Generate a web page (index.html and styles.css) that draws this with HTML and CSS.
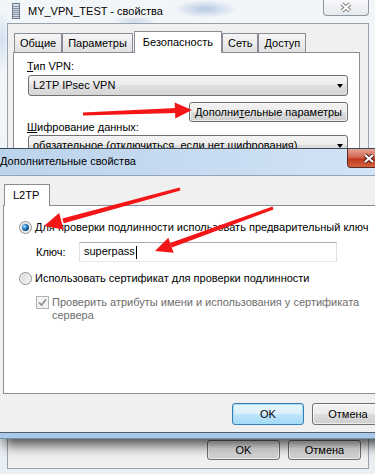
FILE: index.html
```html
<!DOCTYPE html>
<html lang="ru">
<head>
<meta charset="utf-8">
<title>Дополнительные свойства</title>
<link rel="stylesheet" href="styles.css">
</head>
<body>
<div class="screen">
  <div class="win-bg">
    <div class="bg-title">
      <svg class="app-icon" width="8" height="16" viewBox="0 0 8 16">
        <rect x="0.5" y="0.5" width="7" height="15" fill="#d3dbe4" stroke="#6f7d8c"/>
        <path d="M1 3.5h6M1 5.5h6M1 7.5h6M1 9.5h6M1 11.5h6M1 13.5h6" stroke="#8192a4" stroke-width="1"/>
      </svg>
      <span class="bg-title-text">MY_VPN_TEST - свойства</span>
      <div class="bg-close">
        <svg width="14" height="11" viewBox="0 0 14 11"><path d="M3 2l8 7M11 2l-8 7" stroke="#7d7d7d" stroke-width="4"/><path d="M3 2l8 7M11 2l-8 7" stroke="#fff" stroke-width="2"/></svg>
      </div>
    </div>
    <div class="bg-client">
      <div class="tabs">
        <div class="tab">Общие</div>
        <div class="tab">Параметры</div>
        <div class="tab active">Безопасность</div>
        <div class="tab">Сеть</div>
        <div class="tab">Доступ</div>
      </div>
      <div class="bg-panel">
        <div class="label"><u>Т</u>ип VPN:</div>
        <div class="combo"><span class="combo-text">L2TP IPsec VPN</span><span class="caret"></span></div>
        <div class="btn-row"><span class="btn btn-wide">Дополни<u>т</u>ельные параметры</span></div>
        <div class="label label-enc"><u>Ш</u>ифрование данных:</div>
        <div class="combo combo-enc"><span class="combo-text">обязательное (отключиться, если нет шифрования)</span><span class="caret"></span></div>
      </div>
      <div class="dlg-buttons bg-buttons">
        <span class="btn btn-dlg">OK</span>
        <span class="btn btn-dlg">Отмена</span>
      </div>
    </div>
  </div>

  <div class="win-fg">
    <div class="fg-title">
      <span class="fg-title-text">Дополнительные свойства</span>
      <div class="fg-close">
        <svg width="14" height="11" viewBox="0 0 14 11"><path d="M3 2l8 7M11 2l-8 7" stroke="#4a1a12" stroke-width="4"/><path d="M3 2l8 7M11 2l-8 7" stroke="#fff" stroke-width="2.2"/></svg>
      </div>
    </div>
    <div class="fg-client">
      <div class="tabs fg-tabs"><div class="tab active fg-tab">L2TP</div></div>
      <div class="fg-panel">
        <div class="opt"><span class="radio checked"></span><span>Для проверки подлинности использовать предварительный ключ</span></div>
        <div class="key-row"><span class="key-label">Ключ:</span><div class="input"><span class="typed">superpass</span></div></div>
        <div class="opt opt-cert"><span class="radio"></span><span>Использовать сертификат для проверки подлинности</span></div>
        <div class="opt opt-check">
          <svg class="checkbox" width="13" height="13" viewBox="0 0 13 13"><rect x="0.5" y="0.5" width="12" height="12" fill="#f4f4f4" stroke="#b1b1b1"/><path d="M3 6.5l2.5 2.5L10 3.5" fill="none" stroke="#8d8d8d" stroke-width="1.6"/></svg>
          <span class="disabled-text">Проверить атрибуты имени и использования у сертификата сервера</span>
        </div>
      </div>
      <div class="dlg-buttons fg-buttons">
        <span class="btn btn-dlg btn-default">OK</span>
        <span class="btn btn-dlg">Отмена</span>
      </div>
    </div>
  </div>

  <svg class="arrows" width="375" height="474" viewBox="0 0 375 474">
    <g fill="#f41616">
      <polygon points="82.9,112.5 175.9,108.1 176.1,113.1 83.1,115.5"/>
      <polygon points="192,110 175.3,118.6 174.7,102.6"/>
      <polygon points="179.6,187.6 180.4,190.4 63.7,223.2 62.3,218.4"/>
      <polygon points="44,226 63.6,229.5 59.2,213.1"/>
      <polygon points="272.5,206.6 273.5,209.4 171.9,247.5 170.1,242.9"/>
      <polygon points="155,251 173.7,252.7 168.3,237.7"/>
    </g>
  </svg>
</div>
</body>
</html>
```

FILE: styles.css
```css
* { box-sizing: border-box; }
html, body { margin: 0; padding: 0; }
body {
  width: 375px; height: 474px; overflow: hidden;
  font-family: "Liberation Sans", Arial, sans-serif;
  font-size: 11px; line-height: 13px; color: #000;
  background: #eef2f6;
}
.screen {
  position: relative; width: 375px; height: 474px; overflow: hidden;
  background:
    radial-gradient(ellipse 32px 9px at 205px 9px, rgba(110,145,200,.45), rgba(110,145,200,0)),
    radial-gradient(ellipse 22px 5px at 135px 21px, rgba(120,150,200,.3), rgba(120,150,200,0)),
    radial-gradient(ellipse 10px 30px at 2px 40px, rgba(150,185,225,.35), rgba(150,185,225,0)),
    linear-gradient(#f3f6f9, #eaeff4);
}

/* background window */
.win-bg { display: flex; flex-direction: column; height: 474px; padding: 0 6px 0 7px; }
.bg-title { height: 23px; flex: none; display: flex; align-items: center; padding-left: 5px; }
.app-icon { flex: none; align-self: flex-start; margin-top: 3px; }
.bg-title-text { margin-left: 8px; text-shadow: 0 0 6px #fff, 0 0 3px #fff; }
.bg-close {
  margin-left: auto; align-self: flex-start; width: 46px; height: 16px;
  border: 1px solid #8e97a1; border-top: none; border-radius: 0 0 4px 4px;
  background: linear-gradient(#f8f9fb, #e6e9ed);
  display: flex; align-items: center; justify-content: center;
}
.bg-client {
  height: 446px; flex: none; display: flex; flex-direction: column;
  border: 1px solid #98a2ad; background: #f0f0f0;
  padding: 7px 8px 8px 5px;
}
.tabs { display: flex; align-items: flex-end; height: 22px; margin-bottom: -1px; position: relative; z-index: 1; padding-left: 1px; flex: none; }
.tab {
  height: 19px; margin-bottom: 1px; padding: 3px 5px 0;
  border: 1px solid #898c95; border-bottom: none;
  background: linear-gradient(#f6f6f6, #e1e1e1);
  white-space: nowrap;
}
.tab.active { height: 22px; margin: 0 0 0 1px; padding: 4px 8px 0; background: #fff; }
.bg-panel { flex: 1; border: 1px solid #898c95; background: #fff; padding: 7px 11px 0 14px; }
.label { margin-left: -1px; white-space: nowrap; }
.combo {
  margin-top: 2px; height: 21px; border: 1px solid #707070; border-radius: 3px;
  background: linear-gradient(#f4f4f4, #ebebeb 50%, #e0e0e0 50%, #d6d6d6);
  display: flex; align-items: center; padding: 0 4px; overflow: hidden; white-space: nowrap;
}
.caret { margin-left: auto; width: 0; height: 0; border-left: 3.5px solid transparent; border-right: 3.5px solid transparent; border-top: 4px solid #000; flex: none; }
.btn-row { display: flex; justify-content: flex-end; margin-top: 6px; }
.btn {
  display: inline-flex; align-items: center; justify-content: center;
  border: 1px solid #707070; border-radius: 3px;
  background: linear-gradient(#f2f2f2, #ebebeb 50%, #dddddd 50%, #cfcfcf);
  box-shadow: inset 0 0 0 1px rgba(255,255,255,.6);
  white-space: nowrap;
}
.btn-wide { height: 20px; padding: 0 5px; }
.label-enc { margin-top: -1px; }
.combo-enc { margin-top: 1px; }
.dlg-buttons { display: flex; justify-content: flex-end; gap: 8px; flex: none; }
.bg-buttons { margin-top: 9px; margin-right: -1px; }
.btn-dlg { width: 73px; height: 20px; }

/* front dialog */
.win-fg {
  position: absolute; top: 148px; left: 0; width: 400px; z-index: 2;
  border-top: 1px solid #3d4a57; border-bottom: 1px solid #7390ae;
  background: #a9c8ea; padding-bottom: 5px;
  box-shadow: 0 10px 12px -4px rgba(0,0,0,.7);
}
.fg-title {
  height: 26px; display: flex; align-items: flex-start;
  background: linear-gradient(90deg, #bcd3ec, #c9ddf2 60%, #d4e6f7);
}
.fg-title-text { margin: 6px 0 0 0; white-space: nowrap; }
.fg-close {
  margin-left: auto; margin-right: 10px; width: 43px; height: 19px;
  border: 1px solid #5d2a25; border-top: none; border-radius: 0 0 4px 4px;
  background: linear-gradient(#e6a395, #d36a55 45%, #c0391f 55%, #d3643f);
  display: flex; align-items: center; justify-content: center;
}
.fg-client {
  border-top: 1px solid #93a3b5; border-bottom: 1px solid #535f6b;
  background: #f0f0f0; padding: 9px 8px 7px 3px;
}
.fg-tabs { height: 21px; padding-left: 0; }
.fg-tab { height: 21px; width: 46px; margin: 0; padding: 3px 0 0 6px; }
.fg-panel { height: 189px; border: 1px solid #898c95; background: #fff; padding: 15px 0 0 15px; }
.opt { display: flex; align-items: center; height: 13px; white-space: nowrap; }
.radio {
  position: relative; flex: none; width: 13px; height: 13px; margin-right: 3px;
  border-radius: 50%; border: 1px solid #8e8f8f;
  background: linear-gradient(135deg, #d4d4d4, #f8f8f8);
  box-shadow: inset 0 0 0 1px #f2f2f2;
}
.radio.checked::after {
  content: ""; position: absolute; left: 2px; top: 2px; width: 7px; height: 7px; border-radius: 50%;
  background: radial-gradient(circle at 35% 35%, #b4e3ff 0, #2c8ad0 35%, #0e3e6c 75%, #16293d 100%);
}
.key-row { display: flex; align-items: center; margin: 8px 0 0 17px; height: 20px; }
.key-label { width: 43px; flex: none; }
.input {
  width: 258px; height: 20px; border: 1px solid; border-color: #abadb3 #dbdfe6 #e3e9ef #e2e3ea;
  background: #fff; padding-left: 4px; display: flex; align-items: center;
}
.typed::after { content: ""; display: inline-block; width: 1px; height: 13px; background: #000; vertical-align: middle; margin-left: 1px; }
.opt-cert { margin-top: 10px; }
.opt-check { margin: 11px 0 0 17px; height: auto; align-items: flex-start; }
.checkbox { flex: none; margin-right: 3px; }
.disabled-text { color: #6d6d6d; width: 318px; white-space: normal; }
.fg-buttons { margin: 9px 8px 0 0; }
.fg-buttons .btn-dlg { width: 72px; height: 22px; }
.btn-default {
  border-color: #3c7fb1;
  background: linear-gradient(#eaf6fd, #d9f0fc 50%, #bee6fd 50%, #a7d9f5);
  box-shadow: inset 0 0 0 1px #9fe0fb;
}

.arrows { position: absolute; top: 0; left: 0; z-index: 5; pointer-events: none; }
```
